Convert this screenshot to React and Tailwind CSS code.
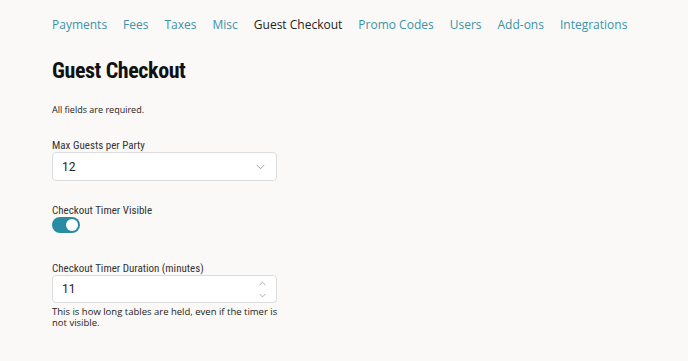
import { ChevronDown, ChevronUp } from "lucide-react"

const tabs = [
  { name: "Payments" },
  { name: "Fees" },
  { name: "Taxes" },
  { name: "Misc" },
  { name: "Guest Checkout", active: true },
  { name: "Promo Codes" },
  { name: "Users" },
  { name: "Add-ons" },
  { name: "Integrations" },
]

export default function App() {
  return (
    <div className="h-[361px] w-full overflow-hidden bg-[#faf9f8] px-[52px] font-['Open_Sans',sans-serif] text-[#1f1f1f]">
      {/* tabs */}
      <nav className="flex gap-[16px] whitespace-nowrap pt-[16px] text-[12px] leading-[18px]">
        {tabs.map(tab => (
          <span key={tab.name} className={tab.active ? "text-[#222]" : "text-[#3a93a7]"}>
            {tab.name}
          </span>
        ))}
      </nav>

      <h1 className="mt-[24px] font-['Roboto_Condensed','Liberation_Sans_Narrow','DejaVu_Sans_Condensed',sans-serif] text-[22px] font-bold leading-[26px] tracking-[-0.4px] text-[#111]">
        Guest Checkout
      </h1>

      <p className="mt-[20px] text-[9px] leading-[12px] text-[#222]">All fields are required.</p>

      {/* max guests */}
      <div className="mt-[23px] w-[225px] font-['Roboto_Condensed','Liberation_Sans_Narrow','DejaVu_Sans_Condensed',sans-serif]">
        <label className="block text-[11px] leading-[13px] text-[#333]">Max Guests per Party</label>
        <div className="flex h-[29px] items-center justify-between rounded-[4px] border border-[#dcdcdc] bg-white pl-[9px] pr-[8px] font-['Roboto',sans-serif] text-[12px] text-[#222]">
          <span>12</span>
          <ChevronDown className="h-[14px] w-[15px] text-[#8a8a8a]" strokeWidth={1.4} />
        </div>
      </div>

      {/* timer visible */}
      <div className="mt-[23px] font-['Roboto_Condensed','Liberation_Sans_Narrow','DejaVu_Sans_Condensed',sans-serif]">
        <label className="block text-[11px] leading-[13px] text-[#333]">Checkout Timer Visible</label>
        <div className="mt-[0px] flex h-[16px] w-[28px] items-center justify-end rounded-full bg-[#2a8ca2] pr-[2px]">
          <div className="h-[12px] w-[12px] rounded-full bg-white" />
        </div>
      </div>

      {/* timer duration */}
      <div className="mt-[29px] w-[225px] font-['Roboto_Condensed','Liberation_Sans_Narrow','DejaVu_Sans_Condensed',sans-serif]">
        <label className="block text-[11px] leading-[13px] text-[#333]">Checkout Timer Duration (minutes)</label>
        <div className="flex h-[28px] items-center justify-between rounded-[4px] border border-[#dcdcdc] bg-white pl-[9px] pr-[8px] font-['Roboto',sans-serif] text-[12px] text-[#222]">
          <span>11</span>
          <div className="flex flex-col items-center gap-[1px] text-[#8a8a8a]">
            <ChevronUp className="h-[11px] w-[11px]" strokeWidth={1.5} />
            <ChevronDown className="h-[11px] w-[11px]" strokeWidth={1.5} />
          </div>
        </div>
        <p className="mt-[3px] w-[230px] font-['Open_Sans',sans-serif] text-[9.5px] leading-[11px] text-[#222]">
          This is how long tables are held, even if the timer is not visible.
        </p>
      </div>
    </div>
  )
}
